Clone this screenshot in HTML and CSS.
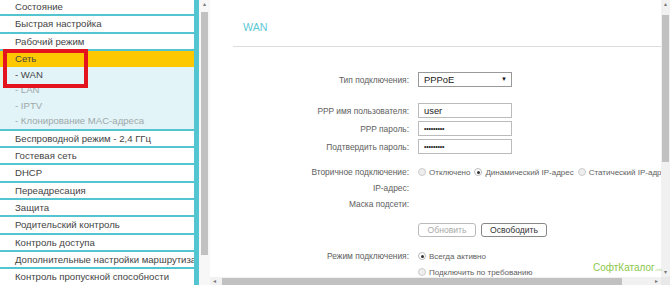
FILE: index.html
```html
<!DOCTYPE html>
<html>
<head>
    <title>WAN</title>
    <link rel="stylesheet" href="styles.css">
</head>
<body>
    <div class="window">
        <nav class="sidebar">
            <ul class="menu">
                <li class="menu-item">Состояние</li>
                <li class="menu-item">Быстрая настройка</li>
                <li class="menu-item">Рабочий режим</li>
                <li class="menu-item active">Сеть</li>
                <li class="submenu">
                    <div class="sub-item current">- WAN</div>
                    <div class="sub-item">- LAN</div>
                    <div class="sub-item">- IPTV</div>
                    <div class="sub-item">- Клонирование MAC-адреса</div>
                </li>
                <li class="menu-item">Беспроводной режим - 2,4 ГГц</li>
                <li class="menu-item">Гостевая сеть</li>
                <li class="menu-item">DHCP</li>
                <li class="menu-item">Переадресация</li>
                <li class="menu-item">Защита</li>
                <li class="menu-item">Родительский контроль</li>
                <li class="menu-item">Контроль доступа</li>
                <li class="menu-item">Дополнительные настройки маршрутизации</li>
                <li class="menu-item">Контроль пропускной способности</li>
            </ul>
        </nav>

        <div class="side-scroll">
            <span class="arrow">&#9652;</span>
            <div class="side-thumb"></div>
        </div>

        <main class="frame">
            <div class="frame-body">
                <div class="content">
                    <h2 class="title">WAN</h2>

                    <div class="form">
                        <div class="row row-type">
                            <label>Тип подключения:</label>
                            <div class="select">PPPoE <span class="caret">&#9660;</span></div>
                        </div>

                        <div class="group">
                            <div class="row">
                                <label>PPP имя пользователя:</label>
                                <div class="input">user</div>
                            </div>
                            <div class="row">
                                <label>PPP пароль:</label>
                                <div class="input dots">&bull;&bull;&bull;&bull;&bull;&bull;&bull;&bull;&bull;</div>
                            </div>
                            <div class="row">
                                <label>Подтвердить пароль:</label>
                                <div class="input dots">&bull;&bull;&bull;&bull;&bull;&bull;&bull;&bull;&bull;</div>
                            </div>
                        </div>

                        <div class="row row-radio row-second">
                            <label>Вторичное подключение:</label>
                            <div class="radios">
                                <span class="radio"></span>Отключено
                                <span class="radio checked"></span>Динамический IP-адрес
                                <span class="radio"></span>Статический IP-адрес
                            </div>
                        </div>
                        <div class="row row-radio">
                            <label>IP-адрес:</label>
                            <div></div>
                        </div>
                        <div class="row row-radio">
                            <label>Маска подсети:</label>
                            <div></div>
                        </div>

                        <div class="row row-buttons">
                            <span></span>
                            <div class="buttons">
                                <button class="btn" disabled>Обновить</button>
                                <button class="btn">Освободить</button>
                            </div>
                        </div>

                        <div class="row row-radio row-mode">
                            <label>Режим подключения:</label>
                            <div class="radios"><span class="radio checked"></span>Всегда активно</div>
                        </div>
                        <div class="row row-radio">
                            <span></span>
                            <div class="radios"><span class="radio"></span>Подключить по требованию</div>
                        </div>
                    </div>
                </div>

                <div class="vscroll">
                    <span class="arrow">&#9652;</span>
                    <div class="v-thumb"></div>
                    <span class="arrow down">&#9662;</span>
                </div>
            </div>

            <div class="hscroll">
                <span class="arrow">&#9666;</span>
                <div class="h-thumb"></div>
                <span class="arrow right">&#9656;</span>
                <span class="corner"></span>
            </div>
        </main>

        <div class="annotation"></div>
        <div class="watermark">СофтКаталог<small>.info</small></div>
    </div>
</body>
</html>
```

FILE: styles.css
```css
:root {
    --teal: #52c5d1;
    --sub-bg: #e2f4f8;
    --yellow: #fdc800;
    --label: #606060;
    --text: #444;
    --track: #f1f1f1;
    --thumb: #c1c1c1;
}

* {
    box-sizing: border-box;
}

body {
    margin: 0;
    font-family: "Liberation Sans", Arial, sans-serif;
    color: var(--text);
    background: #fff;
}

.window {
    position: relative;
    display: flex;
    width: 670px;
    height: 285px;
    overflow: hidden;
}

/* left menu */
.sidebar {
    width: 199px;
    flex: none;
    border-right: 5px solid var(--teal);
    overflow: hidden;
}

.menu {
    list-style: none;
    margin: -1px 0 0;
    padding: 0;
}

.menu-item {
    height: 17.33px;
    line-height: 15.33px;
    padding-left: 15px;
    font-size: 9.6px;
    color: var(--text);
    white-space: nowrap;
    border-bottom: 2px solid var(--teal);
}

.menu-item.active {
    background: var(--yellow);
    border-bottom: none;
    height: 15.7px;
    line-height: 15.7px;
}

.submenu {
    background: var(--sub-bg);
    border-bottom: 2px solid var(--teal);
}

.sub-item {
    height: 15.5px;
    line-height: 15.5px;
    padding-left: 15px;
    font-size: 9.6px;
    color: #9fa8a8;
    white-space: nowrap;
}

.sub-item.current {
    color: var(--text);
}

/* fake scrollbars */
.side-scroll {
    width: 11px;
    flex: none;
    background: #f7f7f7;
    display: flex;
    flex-direction: column;
    align-items: center;
}

.arrow {
    font-size: 6px;
    line-height: 9px;
    color: #777;
}

.side-thumb {
    width: 7px;
    height: 243px;
    margin-top: 3px;
    background: var(--thumb);
}

.frame {
    flex: 1;
    display: flex;
    flex-direction: column;
    min-width: 0;
}

.frame-body {
    flex: 1;
    display: flex;
    min-height: 0;
}

.content {
    flex: 1;
    min-width: 0;
    padding-left: 23px;
    overflow: hidden;
}

.vscroll {
    width: 9px;
    flex: none;
    background: var(--track);
    display: flex;
    flex-direction: column;
    align-items: center;
}

.v-thumb {
    width: 7px;
    height: 147px;
    margin-top: 6px;
    background: var(--thumb);
}

.vscroll .down {
    margin-top: auto;
}

.hscroll {
    height: 8px;
    flex: none;
    background: var(--track);
    display: flex;
    align-items: center;
    padding-left: 3px;
}

.hscroll .arrow {
    line-height: 8px;
}

.h-thumb {
    width: 400px;
    height: 7px;
    margin-left: 6px;
    background: var(--thumb);
}

.hscroll .right {
    margin-left: auto;
    margin-right: 3px;
}

.corner {
    width: 9px;
    height: 8px;
    background: #e8e8e8;
}

/* page body */
.title {
    margin: 0;
    height: 47px;
    padding: 21px 0 0 10px;
    font-size: 10.7px;
    font-weight: normal;
    color: #5ec9d5;
    border-bottom: 1px solid #ddd;
}

.form {
    font-size: 8.4px;
}

.row {
    display: grid;
    grid-template-columns: 176px 1fr;
    column-gap: 9px;
    align-items: center;
    height: 15px;
}

.row label {
    text-align: right;
    color: var(--label);
    white-space: nowrap;
}

.row-type {
    margin-top: 25px;
}

.select {
    width: 94px;
    height: 15px;
    line-height: 13px;
    padding: 0 4px 0 5px;
    border: 1px solid #999;
    font-size: 9.4px;
    color: #222;
    display: flex;
    justify-content: space-between;
}

.caret {
    font-size: 6px;
    color: #111;
}

.group {
    margin-top: 16px;
    display: flex;
    flex-direction: column;
    gap: 3px;
}

.input {
    width: 94px;
    height: 15px;
    line-height: 13px;
    padding: 0 5px;
    border: 1px solid #bbb;
    font-size: 9.4px;
    color: #222;
}

.input.dots {
    font-size: 7px;
    letter-spacing: -0.2px;
}

.row-radio {
    height: 16px;
}

.row-second {
    margin-top: 10px;
}

.radios {
    display: flex;
    align-items: center;
    white-space: nowrap;
    color: var(--label);
    font-size: 8px;
}

.radio {
    width: 8px;
    height: 8px;
    border: 1px solid #ccc;
    border-radius: 50%;
    background: #eee;
    margin: 0 3px 0 0;
    flex: none;
    position: relative;
}

.radios .radio:not(:first-child) {
    margin-left: 4px;
}

.radio.checked {
    background: #fff;
    border-color: #bbb;
}

.radio.checked::after {
    content: "";
    position: absolute;
    left: 1.5px;
    top: 1.5px;
    width: 3px;
    height: 3px;
    border-radius: 50%;
    background: #333;
}

.row-buttons {
    margin-top: 11px;
    height: 14px;
}

.buttons {
    display: flex;
    gap: 5px;
}

.btn {
    height: 14px;
    padding: 0 8px;
    font-family: inherit;
    font-size: 8.6px;
    color: #333;
    background: #fff;
    border: 1px solid #888;
    border-radius: 3px;
}

.btn:disabled {
    width: 58px;
    color: #aaa;
    border-color: #bbb;
}

.row-mode {
    margin-top: 11px;
}

/* overlays */
.annotation {
    position: absolute;
    left: 3px;
    top: 49px;
    width: 85px;
    height: 39px;
    border: 4px solid #e3141e;
}

.watermark {
    position: absolute;
    left: 593px;
    top: 262px;
    font-size: 10px;
    color: #8cc84b;
}

.watermark small {
    font-size: 4px;
    color: #b5dc8f;
}
```
